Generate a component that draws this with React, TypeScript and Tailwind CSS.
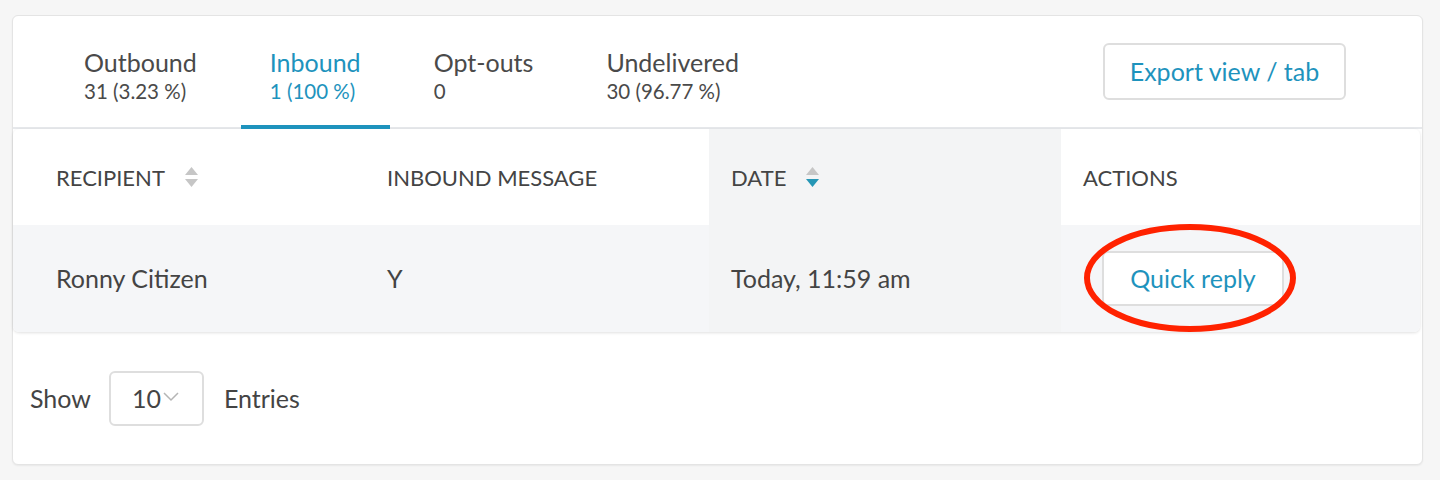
import React from "react";

const BLUE = "text-[#1e93bd]";

function SortIcon({ active }: { active?: "up" | "down" }) {
  return (
    <svg width="15" height="22" viewBox="0 0 15 22" className="ml-[19px]">
      <path d="M7.5 1 L14 9 L1 9 Z" fill={active === "up" ? "#2596b5" : "#c6c6c6"} />
      <path d="M7.5 21 L14 13 L1 13 Z" fill={active === "down" ? "#2596b5" : "#c6c6c6"} />
    </svg>
  );
}

const tabs = [
  { label: "Outbound", sub: "31 (3.23 %)" },
  { label: "Inbound", sub: "1 (100 %)", active: true },
  { label: "Opt-outs", sub: "0" },
  { label: "Undelivered", sub: "30 (96.77 %)" },
];

export default function App() {
  return (
    <div
      className="min-h-[480px] bg-[#f6f6f6] pt-[15px] pl-[12px] text-[#444]"
      style={{ fontFamily: "Lato, 'Open Sans', sans-serif" }}
    >
      <div className="w-[1411px] h-[450px] bg-white rounded-md border border-[#e4e4e4] shadow-[0_1px_2px_rgba(0,0,0,0.06)] flex flex-col">
        {/* Tabs */}
        <div className="h-[113px] flex items-start border-b-2 border-[#e6e8eb]">
          <div className="flex gap-[15px] pl-[42px] h-full">
            {tabs.map((t) => (
              <div key={t.label} className="h-full px-[29px] pt-[31px] relative">
                <div className={`text-[25px] leading-[30px] ${t.active ? BLUE : "text-[#4a4a4a]"}`}>{t.label}</div>
                <div className={`text-[20.5px] leading-[26px] mt-[1px] ${t.active ? BLUE : "text-[#4a4a4a]"}`}>{t.sub}</div>
                {t.active && <div className="absolute bottom-[-2px] left-0 right-0 h-[4px] bg-[#1e93bd]" />}
              </div>
            ))}
          </div>
          <div className="ml-auto mr-[76px] mt-[27px]">
            <button className={`h-[57px] w-[243px] rounded-md border-2 border-[#dedede] bg-white text-[25px] ${BLUE}`}>
              Export view / tab
            </button>
          </div>
        </div>

        {/* Table */}
        <div className="mr-[2px] rounded-md shadow-[0_1px_3px_rgba(0,0,0,0.12)] overflow-hidden">
          <div className="grid grid-cols-[352px_344px_352px_1fr] h-[96px] items-stretch text-[22px] text-[#444]">
            <div className="flex items-center pl-[43px]">
              RECIPIENT <SortIcon />
            </div>
            <div className="flex items-center pl-[22px]">INBOUND MESSAGE</div>
            <div className="flex items-center pl-[22px] bg-[#f3f4f5]">
              DATE <SortIcon active="down" />
            </div>
            <div className="flex items-center pl-[22px]">ACTIONS</div>
          </div>
          <div className="grid grid-cols-[352px_344px_352px_1fr] h-[107px] bg-[#f5f6f8] items-stretch text-[25px] text-[#444]">
            <div className="flex items-center pl-[43px]">Ronny Citizen</div>
            <div className="flex items-center pl-[22px]">Y</div>
            <div className="flex items-center pl-[22px] bg-[#f3f4f5]">Today, 11:59 am</div>
            <div className="flex items-center pl-[41px] relative">
              <button className={`h-[55px] w-[182px] rounded-md border-2 border-[#dedede] bg-white text-[25px] ${BLUE}`}>
                Quick reply
              </button>
              <svg
                className="absolute left-[22px] top-[-3px]"
                width="216"
                height="112"
                viewBox="0 0 216 112"
              >
                <ellipse cx="107" cy="56" rx="103" ry="51" fill="none" stroke="#ff2200" strokeWidth="6" />
              </svg>
            </div>
          </div>
        </div>

        {/* Footer */}
        <div className="flex items-center pl-[17px] mt-[39px] text-[25px] text-[#444]">
          <span>Show</span>
          <div className="ml-[18px] w-[95px] h-[55px] rounded-md border-2 border-[#dedede] flex items-center pl-[21px]">
            <span className="text-[25px]">10</span>
            <svg width="16" height="10" viewBox="0 0 16 10" className="ml-[2px] -mt-[4px]">
              <path d="M1 1 L8 8 L15 1" fill="none" stroke="#b5b5b5" strokeWidth="1.5" />
            </svg>
          </div>
          <span className="ml-[20px]">Entries</span>
        </div>
      </div>
    </div>
  );
}
